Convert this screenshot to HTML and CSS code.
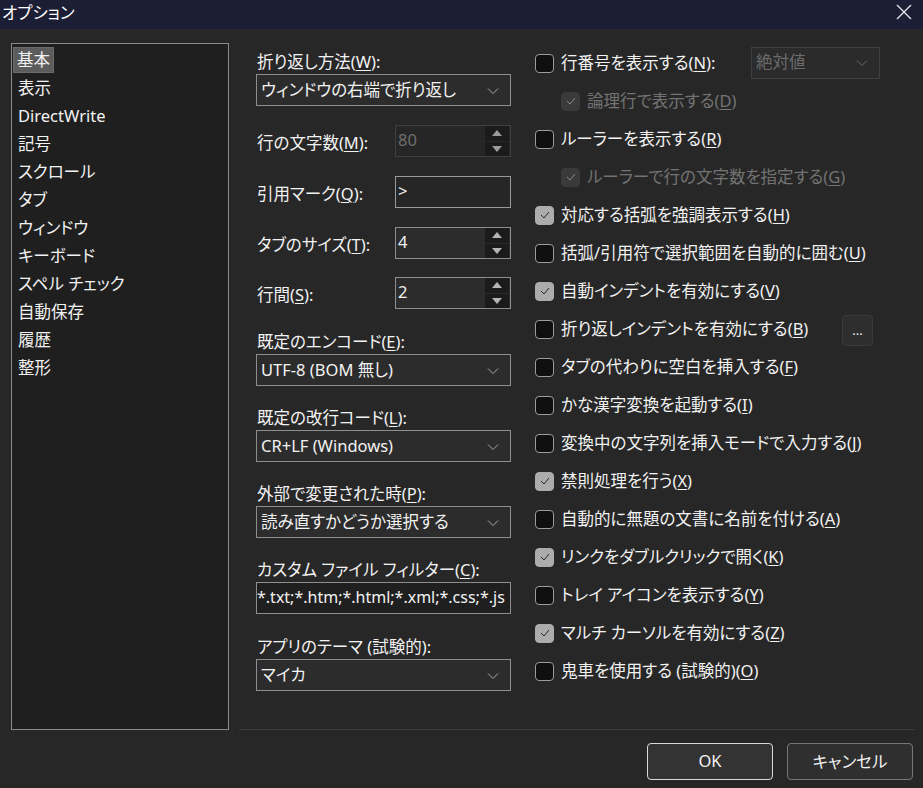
FILE: index.html
```html
<!DOCTYPE html>
<html lang="ja">
<head>
<meta charset="utf-8">
<title>オプション</title>
<link rel="stylesheet" href="styles.css">
</head>
<body>
<div class="window">
  <div class="titlebar">
    <span class="title">オプション</span>
    <svg class="close" width="16" height="16" viewBox="0 0 16 16"><path d="M1 1 L15 15 M15 1 L1 15" stroke="#e8e8e8" stroke-width="1.3" fill="none"/></svg>
  </div>
  <div class="main">
    <ul class="nav">
      <li class="sel"><span>基本</span></li>
      <li><span>表示</span></li>
      <li><span>DirectWrite</span></li>
      <li><span>記号</span></li>
      <li><span>スクロール</span></li>
      <li><span>タブ</span></li>
      <li><span>ウィンドウ</span></li>
      <li><span>キーボード</span></li>
      <li><span>スペル チェック</span></li>
      <li><span>自動保存</span></li>
      <li><span>履歴</span></li>
      <li><span>整形</span></li>
    </ul>
    <div class="area">
      <div class="cols">
        <div class="mid">
          <div class="label">折り返し方法(<u>W</u>):</div>
          <div class="select"><span>ウィンドウの右端で折り返し</span><svg class="chev" width="12" height="8" viewBox="0 0 12 8"><polyline points="1,1.5 6,6.5 11,1.5" fill="none" stroke="#a8a8a8" stroke-width="1"/></svg></div>

          <div class="row r1">
            <span class="rlabel">行の文字数(<u>M</u>):</span>
            <div class="spin disabled"><span>80</span><div class="arrows"><div class="up"><svg width="10" height="6" viewBox="0 0 10 6"><polygon points="5,0 10,6 0,6" fill="#9a9a9a"/></svg></div><div class="dn"><svg width="10" height="6" viewBox="0 0 10 6"><polygon points="0,0 10,0 5,6" fill="#9a9a9a"/></svg></div></div></div>
          </div>
          <div class="row">
            <span class="rlabel">引用マーク(<u>Q</u>):</span>
            <div class="input small"><span>&gt;</span></div>
          </div>
          <div class="row">
            <span class="rlabel">タブのサイズ(<u>T</u>):</span>
            <div class="spin"><span>4</span><div class="arrows"><div class="up"><svg width="10" height="6" viewBox="0 0 10 6"><polygon points="5,0 10,6 0,6" fill="#b4b4b4"/></svg></div><div class="dn"><svg width="10" height="6" viewBox="0 0 10 6"><polygon points="0,0 10,0 5,6" fill="#b4b4b4"/></svg></div></div></div>
          </div>
          <div class="row r4">
            <span class="rlabel">行間(<u>S</u>):</span>
            <div class="spin"><span>2</span><div class="arrows"><div class="up"><svg width="10" height="6" viewBox="0 0 10 6"><polygon points="5,0 10,6 0,6" fill="#b4b4b4"/></svg></div><div class="dn"><svg width="10" height="6" viewBox="0 0 10 6"><polygon points="0,0 10,0 5,6" fill="#b4b4b4"/></svg></div></div></div>
          </div>

          <div class="label gap">既定のエンコード(<u>E</u>):</div>
          <div class="select"><span>UTF-8 (BOM 無し)</span><svg class="chev" width="12" height="8" viewBox="0 0 12 8"><polyline points="1,1.5 6,6.5 11,1.5" fill="none" stroke="#a8a8a8" stroke-width="1"/></svg></div>

          <div class="label gap2">既定の改行コード(<u>L</u>):</div>
          <div class="select"><span>CR+LF (Windows)</span><svg class="chev" width="12" height="8" viewBox="0 0 12 8"><polyline points="1,1.5 6,6.5 11,1.5" fill="none" stroke="#a8a8a8" stroke-width="1"/></svg></div>

          <div class="label gap2">外部で変更された時(<u>P</u>):</div>
          <div class="select"><span>読み直すかどうか選択する</span><svg class="chev" width="12" height="8" viewBox="0 0 12 8"><polyline points="1,1.5 6,6.5 11,1.5" fill="none" stroke="#a8a8a8" stroke-width="1"/></svg></div>

          <div class="label gap2">カスタム ファイル フィルター(<u>C</u>):</div>
          <div class="input wide"><span>*.txt;*.htm;*.html;*.xml;*.css;*.js</span></div>

          <div class="label gap">アプリのテーマ (試験的):</div>
          <div class="select"><span>マイカ</span><svg class="chev" width="12" height="8" viewBox="0 0 12 8"><polyline points="1,1.5 6,6.5 11,1.5" fill="none" stroke="#a8a8a8" stroke-width="1"/></svg></div>
        </div>

        <div class="right">
          <div class="check">
            <span class="lw1"><span class="box"></span><span>行番号を表示する(<u>N</u>):</span></span>
            <div class="select dis small2"><span>絶対値</span><svg class="chev" width="12" height="8" viewBox="0 0 12 8"><polyline points="1,1.5 6,6.5 11,1.5" fill="none" stroke="#6a6a6a" stroke-width="1"/></svg></div>
          </div>
          <div class="check indent disabled"><span class="box on"><svg width="12" height="10" viewBox="0 0 12 10"><polyline points="2,5 5,8 10,2" fill="none" stroke="#8a8a8a" stroke-width="1"/></svg></span><span>論理行で表示する(<u>D</u>)</span></div>
          <div class="check"><span class="box"></span><span>ルーラーを表示する(<u>R</u>)</span></div>
          <div class="check indent disabled"><span class="box on"><svg width="12" height="10" viewBox="0 0 12 10"><polyline points="2,5 5,8 10,2" fill="none" stroke="#8a8a8a" stroke-width="1"/></svg></span><span>ルーラーで行の文字数を指定する(<u>G</u>)</span></div>
          <div class="check"><span class="box on"><svg width="12" height="10" viewBox="0 0 12 10"><polyline points="2,5 5,8 10,2" fill="none" stroke="#2a2a2a" stroke-width="1"/></svg></span><span>対応する括弧を強調表示する(<u>H</u>)</span></div>
          <div class="check"><span class="box"></span><span>括弧/引用符で選択範囲を自動的に囲む(<u>U</u>)</span></div>
          <div class="check"><span class="box on"><svg width="12" height="10" viewBox="0 0 12 10"><polyline points="2,5 5,8 10,2" fill="none" stroke="#2a2a2a" stroke-width="1"/></svg></span><span>自動インデントを有効にする(<u>V</u>)</span></div>
          <div class="check">
            <span class="lw2"><span class="box"></span><span>折り返しインデントを有効にする(<u>B</u>)</span></span>
            <div class="dots">...</div>
          </div>
          <div class="check"><span class="box"></span><span>タブの代わりに空白を挿入する(<u>F</u>)</span></div>
          <div class="check"><span class="box"></span><span>かな漢字変換を起動する(<u>I</u>)</span></div>
          <div class="check"><span class="box"></span><span>変換中の文字列を挿入モードで入力する(<u>J</u>)</span></div>
          <div class="check"><span class="box on"><svg width="12" height="10" viewBox="0 0 12 10"><polyline points="2,5 5,8 10,2" fill="none" stroke="#2a2a2a" stroke-width="1"/></svg></span><span>禁則処理を行う(<u>X</u>)</span></div>
          <div class="check"><span class="box"></span><span>自動的に無題の文書に名前を付ける(<u>A</u>)</span></div>
          <div class="check"><span class="box on"><svg width="12" height="10" viewBox="0 0 12 10"><polyline points="2,5 5,8 10,2" fill="none" stroke="#2a2a2a" stroke-width="1"/></svg></span><span>リンクをダブルクリックで開く(<u>K</u>)</span></div>
          <div class="check"><span class="box"></span><span>トレイ アイコンを表示する(<u>Y</u>)</span></div>
          <div class="check"><span class="box on"><svg width="12" height="10" viewBox="0 0 12 10"><polyline points="2,5 5,8 10,2" fill="none" stroke="#2a2a2a" stroke-width="1"/></svg></span><span>マルチ カーソルを有効にする(<u>Z</u>)</span></div>
          <div class="check"><span class="box"></span><span>鬼車を使用する (試験的)(<u>O</u>)</span></div>
        </div>
      </div>
      <div class="sep"></div>
    </div>
  </div>
  <div class="footer">
    <button class="btn default">OK</button>
    <button class="btn">キャンセル</button>
  </div>
</div>
</body>
</html>
```
FILE: styles.css
```css
html, body {
  margin: 0;
  padding: 0;
  background: #272727;
}
body {
  font-family: "Noto Sans", "Noto Sans CJK JP", sans-serif;
  font-size: 16.5px;
  line-height: 22px;
  color: #f2f2f2;
  font-feature-settings: "palt";
}
.window {
  width: 923px;
  height: 788px;
  display: flex;
  flex-direction: column;
  overflow: hidden;
}
.titlebar {
  height: 29px;
  background: #1c1e35;
  display: flex;
  align-items: center;
  justify-content: space-between;
  padding: 0 11px 0 2px;
  box-sizing: border-box;
  flex: none;
}
.title {
  font-size: 16.5px;
  color: #ffffff;
  margin-top: -4px;
}
.close {
  margin-top: -6px;
}
.main {
  display: flex;
  padding: 14px 0 0 11px;
  height: 701px;
  box-sizing: border-box;
  flex: none;
}
.nav {
  list-style: none;
  margin: 0;
  padding: 2px 0 0 2px;
  width: 218px;
  height: 687px;
  box-sizing: border-box;
  border: 1px solid #8b8b8b;
  background: #1f1f1f;
  flex: none;
}
.nav li {
  height: 28px;
  display: flex;
  align-items: center;
}
.nav li span {
  padding: 1px 4px 1px 4px;
  border: 1px solid transparent;
  margin-left: -1px;
}
.nav li.sel span {
  background: #5c5c5c;
  border-color: #6a6a6a;
  padding: 1px 3px 1px 3px;
}
.area {
  flex: 1;
  margin-left: 10px;
  margin-right: 8px;
  display: flex;
  flex-direction: column;
}
.cols {
  flex: 1;
  display: flex;
  padding-left: 17px;
}
.sep {
  height: 1px;
  background: #3c3c3c;
  margin-bottom: 0;
}
.mid {
  width: 255px;
  padding-top: 8px;
  flex: none;
}
.label {
  height: 22px;
  margin-bottom: 1px;
  padding-left: 1px;
}
.label.gap { margin-top: 22px; }
.label.gap2 { margin-top: 21px; }
.select, .input, .spin {
  box-sizing: border-box;
  height: 32px;
  border: 1px solid #8e8e8e;
  background: #2c2c2c;
  display: flex;
  align-items: center;
  position: relative;
}
.select {
  width: 255px;
  padding-left: 4px;
}
.select span {
  flex: 1;
  margin-top: -1px;
}
.chev {
  margin-right: 11px;
  margin-top: 1px;
}
.row {
  display: flex;
  align-items: center;
  justify-content: space-between;
  margin-top: 19px;
  height: 32px;
}
.row.r4 { margin-top: 18px; }
.rlabel {
  padding-left: 1px;
  margin-top: 4px;
}
.spin, .input.small {
  width: 116px;
  padding-left: 2px;
}
.spin span, .input span {
  flex: 1;
  margin-top: -2px;
}
.spin.disabled {
  border-color: #3f3f3f;
  background: #262626;
  color: #6e6e6e;
}
.arrows {
  width: 24px;
  height: 30px;
  display: flex;
  flex-direction: column;
  gap: 1px;
  margin-right: 1px;
}
.arrows div {
  flex: 1;
  background: #1b1b1b;
  display: flex;
  align-items: center;
  justify-content: center;
}
.input.small {
  border-color: #9a9a9a;
  background: #262626;
}
.input.wide {
  width: 255px;
  padding-left: 0;
  background: #1f1f1f;
  border-color: #8e8e8e;
  overflow: hidden;
  white-space: nowrap;
  font-size: 16px;
}
.right {
  margin-left: 24px;
  padding-top: 1px;
  flex: 1;
}
.check {
  height: 38px;
  display: flex;
  align-items: center;
  gap: 7px;
  white-space: nowrap;
}
.check > span:last-child {
  margin-top: -1px;
}
.lw1, .lw2 {
  display: flex;
  align-items: center;
  gap: 7px;
}
.lw1 { width: 209px; }
.lw2 { width: 300px; }
.check.indent {
  padding-left: 26px;
}
.check.disabled {
  color: #737373;
}
.box {
  width: 19px;
  height: 19px;
  box-sizing: border-box;
  border: 1px solid #9c9c9c;
  border-radius: 4px;
  background: #0f0f0f;
  display: flex;
  align-items: center;
  justify-content: center;
  flex: none;
}
.box.on {
  background: #acacac;
  border-color: #acacac;
}
.disabled .box.on {
  background: #3a3a3a;
  border-color: #3a3a3a;
}
.select.dis {
  width: 129px;
  background: #2b2b2b;
  border-color: #3f3f3f;
  color: #6c6c6c;
  margin-top: -1px;
}
.dots {
  width: 31px;
  height: 31px;
  box-sizing: border-box;
  border: 1px solid #3a3a3a;
  border-radius: 4px;
  background: #2e2e2e;
  display: flex;
  align-items: center;
  justify-content: center;
  font-size: 13px;
  margin-top: 2px;
}
.footer {
  flex: 1;
  display: flex;
  justify-content: flex-end;
  gap: 14px;
  padding: 13px 10px 0 0;
}
.btn {
  width: 126px;
  height: 37px;
  box-sizing: border-box;
  border: 1px solid #777777;
  border-radius: 4px;
  background: #2f2f2f;
  color: #f2f2f2;
  font-family: "Noto Sans", "Noto Sans CJK JP", sans-serif;
  font-size: 16.5px;
  font-feature-settings: "palt";
  padding: 0 0 2px 0;
}
.btn.default {
  border-color: #d8d8d8;
  background: #333333;
}
u {
  text-underline-offset: 2px;
  text-decoration-thickness: 1px;
}
```
